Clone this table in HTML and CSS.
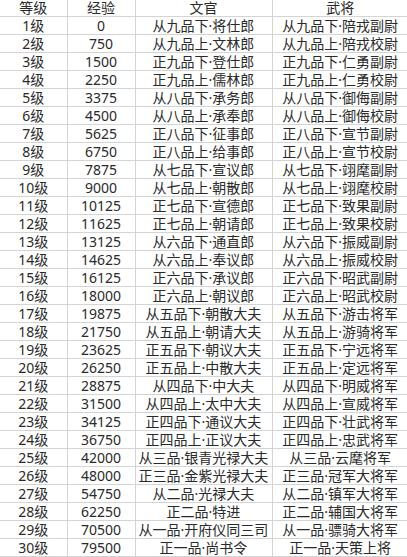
FILE: index.html
```html
<!DOCTYPE html>
<html lang="zh">
<head>
<meta charset="utf-8">
<link rel="stylesheet" href="styles.css">
</head>
<body>
<table class="grid">
<colgroup><col class="c1"><col class="c2"><col class="c3"><col class="c4"></colgroup>
<tr class="head"><td>等级</td><td>经验</td><td>文官</td><td>武将</td></tr>
<tr><td>1级</td><td>0</td><td>从九品下·将仕郎</td><td>从九品下·陪戎副尉</td></tr>
<tr><td>2级</td><td>750</td><td>从九品上·文林郎</td><td>从九品上·陪戎校尉</td></tr>
<tr><td>3级</td><td>1500</td><td>正九品下·登仕郎</td><td>正九品下·仁勇副尉</td></tr>
<tr><td>4级</td><td>2250</td><td>正九品上·儒林郎</td><td>正九品上·仁勇校尉</td></tr>
<tr><td>5级</td><td>3375</td><td>从八品下·承务郎</td><td>从八品下·御侮副尉</td></tr>
<tr><td>6级</td><td>4500</td><td>从八品上·承奉郎</td><td>从八品上·御侮校尉</td></tr>
<tr><td>7级</td><td>5625</td><td>正八品下·征事郎</td><td>正八品下·宣节副尉</td></tr>
<tr><td>8级</td><td>6750</td><td>正八品上·给事郎</td><td>正八品上·宣节校尉</td></tr>
<tr><td>9级</td><td>7875</td><td>从七品下·宣议郎</td><td>从七品下·翊麾副尉</td></tr>
<tr><td>10级</td><td>9000</td><td>从七品上·朝散郎</td><td>从七品上·翊麾校尉</td></tr>
<tr><td>11级</td><td>10125</td><td>正七品下·宣德郎</td><td>正七品下·致果副尉</td></tr>
<tr><td>12级</td><td>11625</td><td>正七品上·朝请郎</td><td>正七品上·致果校尉</td></tr>
<tr><td>13级</td><td>13125</td><td>从六品下·通直郎</td><td>从六品下·振威副尉</td></tr>
<tr><td>14级</td><td>14625</td><td>从六品上·奉议郎</td><td>从六品上·振威校尉</td></tr>
<tr><td>15级</td><td>16125</td><td>正六品下·承议郎</td><td>正六品下·昭武副尉</td></tr>
<tr><td>16级</td><td>18000</td><td>正六品上·朝议郎</td><td>正六品上·昭武校尉</td></tr>
<tr><td>17级</td><td>19875</td><td>从五品下·朝散大夫</td><td>从五品下·游击将军</td></tr>
<tr><td>18级</td><td>21750</td><td>从五品上·朝请大夫</td><td>从五品上·游骑将军</td></tr>
<tr><td>19级</td><td>23625</td><td>正五品下·朝议大夫</td><td>正五品下·宁远将军</td></tr>
<tr><td>20级</td><td>26250</td><td>正五品上·中散大夫</td><td>正五品上·定远将军</td></tr>
<tr><td>21级</td><td>28875</td><td>从四品下·中大夫</td><td>从四品下·明威将军</td></tr>
<tr><td>22级</td><td>31500</td><td>从四品上·太中大夫</td><td>从四品上·宣威将军</td></tr>
<tr><td>23级</td><td>34125</td><td>正四品下·通议大夫</td><td>正四品下·壮武将军</td></tr>
<tr><td>24级</td><td>36750</td><td>正四品上·正议大夫</td><td>正四品上·忠武将军</td></tr>
<tr><td>25级</td><td>42000</td><td>从三品·银青光禄大夫</td><td>从三品·云麾将军</td></tr>
<tr><td>26级</td><td>48000</td><td>正三品·金紫光禄大夫</td><td>正三品·冠军大将军</td></tr>
<tr><td>27级</td><td>54750</td><td>从二品·光禄大夫</td><td>从二品·镇军大将军</td></tr>
<tr><td>28级</td><td>62250</td><td>正二品·特进</td><td>正二品·辅国大将军</td></tr>
<tr><td>29级</td><td>70500</td><td>从一品·开府仪同三司</td><td>从一品·骠骑大将军</td></tr>
<tr><td>30级</td><td>79500</td><td>正一品·尚书令</td><td>正一品·天策上将</td></tr>
</table>
</body>
</html>
```
FILE: styles.css
```css
html, body {
  margin: 0;
  padding: 0;
  background: #ffffff;
  overflow: hidden;
}
.grid {
  border-collapse: collapse;
  table-layout: fixed;
  width: 408px;
  font-family: "Noto Sans", "Noto Sans CJK SC", sans-serif;
  font-size: 14px;
  color: #2a2a2a;
}
.c1 { width: 67px; }
.c2 { width: 68px; }
.c3 { width: 137px; }
.c4 { width: 136px; }
.grid td {
  height: 17px;
  padding: 0;
  line-height: 17px;
  text-align: center;
  white-space: nowrap;
  border-right: 1px solid #d4d4d4;
  border-bottom: 1px solid #d4d4d4;
}
.grid td:last-child {
  border-right: none;
}
.grid .head td {
  height: 16px;
  line-height: 16px;
}
```
